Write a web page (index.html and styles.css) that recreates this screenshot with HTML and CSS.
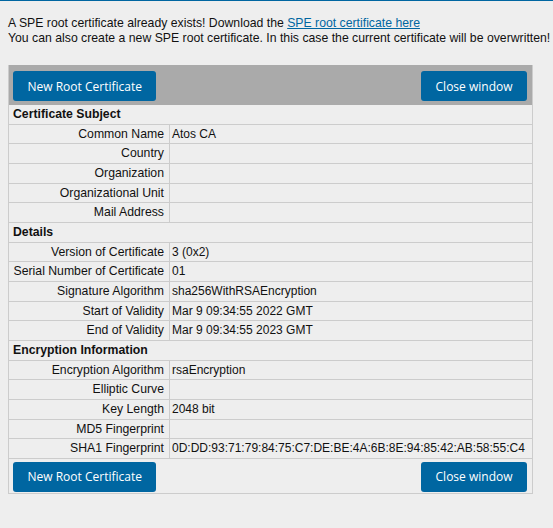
FILE: index.html
```html
<!DOCTYPE html>
<html>
<head>
<meta charset="utf-8">
<link rel="stylesheet" href="styles.css">
</head>
<body>
<div class="page">
  <p class="intro">A SPE root certificate already exists! Download the <a href="#" class="link">SPE root certificate here</a><br>You can also create a new SPE root certificate. In this case the current certificate will be overwritten!</p>
  <div class="panel">
    <div class="bar bar-top">
      <button class="btn">New Root Certificate</button>
      <button class="btn">Close window</button>
    </div>
    <table class="cert">
      <tr><th colspan="2" class="section">Certificate Subject</th></tr>
      <tr><td class="lbl">Common Name</td><td class="val">Atos CA</td></tr>
      <tr><td class="lbl">Country</td><td class="val"></td></tr>
      <tr><td class="lbl">Organization</td><td class="val"></td></tr>
      <tr><td class="lbl">Organizational Unit</td><td class="val"></td></tr>
      <tr><td class="lbl">Mail Address</td><td class="val"></td></tr>
      <tr><th colspan="2" class="section">Details</th></tr>
      <tr><td class="lbl">Version of Certificate</td><td class="val">3 (0x2)</td></tr>
      <tr><td class="lbl">Serial Number of Certificate</td><td class="val">01</td></tr>
      <tr><td class="lbl">Signature Algorithm</td><td class="val">sha256WithRSAEncryption</td></tr>
      <tr><td class="lbl">Start of Validity</td><td class="val">Mar 9 09:34:55 2022 GMT</td></tr>
      <tr><td class="lbl">End of Validity</td><td class="val">Mar 9 09:34:55 2023 GMT</td></tr>
      <tr><th colspan="2" class="section">Encryption Information</th></tr>
      <tr><td class="lbl">Encryption Algorithm</td><td class="val">rsaEncryption</td></tr>
      <tr><td class="lbl">Elliptic Curve</td><td class="val"></td></tr>
      <tr><td class="lbl">Key Length</td><td class="val">2048 bit</td></tr>
      <tr><td class="lbl">MD5 Fingerprint</td><td class="val"></td></tr>
      <tr><td class="lbl">SHA1 Fingerprint</td><td class="val">0D:DD:93:71:79:84:75:C7:DE:BE:4A:6B:8E:94:85:42:AB:58:55:C4</td></tr>
    </table>
    <div class="bar bar-bottom">
      <button class="btn">New Root Certificate</button>
      <button class="btn">Close window</button>
    </div>
  </div>
</div>
</body>
</html>
```

FILE: styles.css
```css
html, body {
  margin: 0;
  padding: 0;
  background: #eeeeee;
}
body {
  border-top: 1px solid #0066a1;
  font-family: "Liberation Sans", Arial, sans-serif;
  font-size: 12px;
  color: #111;
}
.page {
  padding: 15px 8px 8px 8px;
}
.intro {
  margin: 0 0 19px 0;
  line-height: 15px;
  font-size: 12.25px;
  white-space: nowrap;
}
.link {
  color: #0066a1;
  text-decoration: underline;
}
.panel {
  width: 523px;
  border: 1px solid #cccccc;
  border-top: none;
}
.bar {
  display: flex;
  justify-content: space-between;
  align-items: center;
}
.bar-top {
  background: #aaaaaa;
  padding: 6px 5px 4px 4px;
  height: 30px;
}
.bar-bottom {
  padding: 3px 5px 1px 4px;
  height: 30px;
}
.btn {
  font-family: "Open Sans", sans-serif;
  font-size: 12px;
  color: #ffffff;
  background: #0066a1;
  border: none;
  border-radius: 3px;
  height: 30px;
  padding: 0 14.5px;
  cursor: pointer;
}
.cert {
  width: 100%;
  border-collapse: collapse;
}
.cert th, .cert td {
  border-bottom: 1px solid #cccccc;
  padding: 2px 4px;
  line-height: 14.65px;
  height: 14.65px;
  white-space: nowrap;
}
.section {
  text-align: left;
  font-weight: bold;
  font-size: 12.25px;
}
.cert .lbl {
  text-align: right;
  width: 151px;
  padding-right: 5px;
  font-size: 12.25px;
  border-right: 1px solid #cccccc;
}
.cert .val {
  text-align: left;
  padding-left: 2px;
}
```
